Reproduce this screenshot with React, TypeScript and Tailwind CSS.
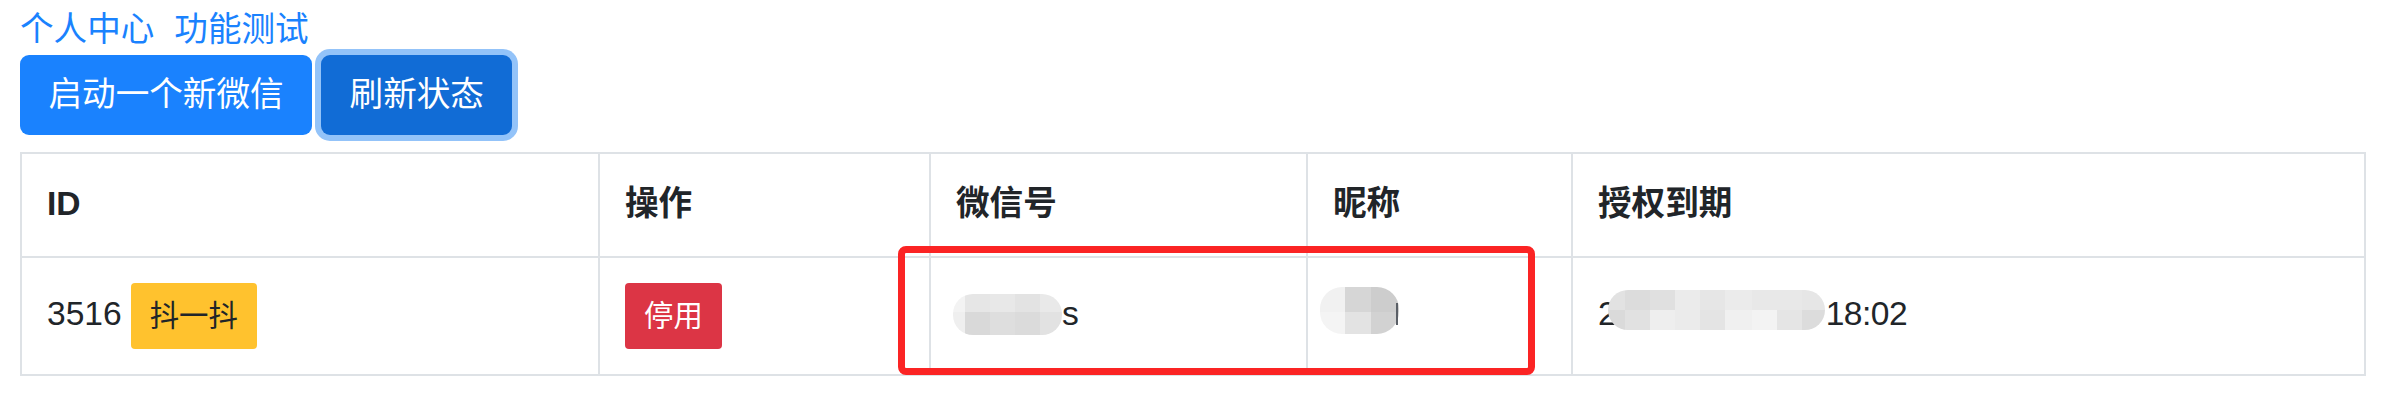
import React from "react";

const FONT = '"Liberation Sans", "Noto Sans CJK SC", sans-serif';

function Mosaic({
  cols,
  rows,
  colors,
  className,
}: {
  cols: number[];
  rows: number[];
  colors: string[][];
  className: string;
}) {
  return (
    <div className={"flex flex-col overflow-hidden shrink-0 " + className}>
      {rows.map((h, r) => (
        <div key={r} className="flex" style={{ height: h }}>
          {cols.map((w, c) => (
            <div key={c} style={{ width: w, background: colors[r][c] }} />
          ))}
        </div>
      ))}
    </div>
  );
}

export default function App() {
  const th =
    "h-[104px] border-r-2 border-b-2 border-[#dee2e6] px-[25px] pt-[25px] font-bold leading-[50px] text-[#212529]";
  const td =
    "h-[118px] border-r-2 border-b-2 border-[#dee2e6] px-[25px] flex items-center text-[#212529]";
  return (
    <div
      className="relative w-[2396px] h-[400px] bg-white pl-[20px] text-[33.6px]"
      style={{ fontFamily: FONT }}
    >
      <div className="flex gap-[20px] pt-[5px] leading-[50px] text-[#1a82fe]">
        <a className="cursor-pointer">个人中心</a>
        <a className="cursor-pointer">功能测试</a>
      </div>
      <div className="flex gap-[9px]">
        <button className="h-[80px] px-[28.5px] rounded-[9px] bg-[#1a82fe] text-white leading-none flex items-center">
          启动一个新微信
        </button>
        <button className="h-[80px] px-[28.5px] rounded-[9px] bg-[#116cd6] text-white leading-none flex items-center shadow-[0_0_0_6px_#93c3f9]">
          刷新状态
        </button>
      </div>
      <div className="mt-[17px] w-[2346px] grid grid-cols-[578px_331px_377px_265px_793px] border-l-2 border-t-2 border-[#dee2e6]">
        <div className={th}>ID</div>
        <div className={th}>操作</div>
        <div className={th}>微信号</div>
        <div className={th}>昵称</div>
        <div className={th}>授权到期</div>

        <div className={td + " gap-[9px]"}>
          <span className="leading-[50px] -translate-y-[2px]">3516</span>
          <button className="h-[66px] px-[19px] rounded-[4px] bg-[#ffc22e] text-[#212529] text-[29.4px] leading-none flex items-center">
            抖一抖
          </button>
        </div>
        <div className={td}>
          <button className="h-[66px] px-[19px] rounded-[4px] bg-[#dc3545] text-white text-[29.4px] leading-none flex items-center">
            停用
          </button>
        </div>
        <div className={td}>
          <Mosaic
            className="-ml-[3px] rounded-[20px] -translate-y-[2px]"
            cols={[12, 25, 25, 25, 22]}
            rows={[18, 23]}
            colors={[
              ["#f3f3f3", "#e6e6e6", "#e8e8e8", "#e3e3e3", "#e9e9e9"],
              ["#efefef", "#d9d9d9", "#dedede", "#dbdbdb", "#e2e2e2"],
            ]}
          />
          <span className="leading-[50px] -translate-y-[2px]">s</span>
        </div>
        <div className={td}>
          <Mosaic
            className="-ml-[13px] rounded-[22px] -translate-y-[6px]"
            cols={[25, 26, 28]}
            rows={[25, 22]}
            colors={[
              ["#f1f1f1", "#d6d6d6", "#cdcdcd"],
              ["#f4f4f4", "#e3e3e3", "#d2d2d2"],
            ]}
          />
          <span className="-ml-[3px] w-[2px] h-[22px] bg-[#5a5f66] -translate-y-[2px]" />
        </div>
        <div className={td}>
          <span className="leading-[50px] -translate-y-[2px]">2</span>
          <Mosaic
            className="-ml-[9px] rounded-[20px] -translate-y-[6px]"
            cols={[17, 25, 25, 25, 25, 27, 25, 25, 23]}
            rows={[20, 20]}
            colors={[
              ["#e2e2e2", "#dcdcdc", "#e0e0e0", "#ebebeb", "#e6e6e6", "#ebebeb", "#e8e8e8", "#e8e8e8", "#e6e6e6"],
              ["#dadada", "#e1e1e1", "#eeeeee", "#ebebeb", "#e4e4e4", "#f0f0f0", "#f3f3f3", "#e5e5e5", "#dcdcdc"],
            ]}
          />
          <span className="ml-[1px] leading-[50px] -translate-y-[2px] tracking-[-0.5px]">18:02</span>
        </div>
      </div>
      <div className="absolute left-[898px] top-[246px] w-[637px] h-[129px] border-[7px] border-[#fb2424] rounded-[8px] pointer-events-none" />
    </div>
  );
}
